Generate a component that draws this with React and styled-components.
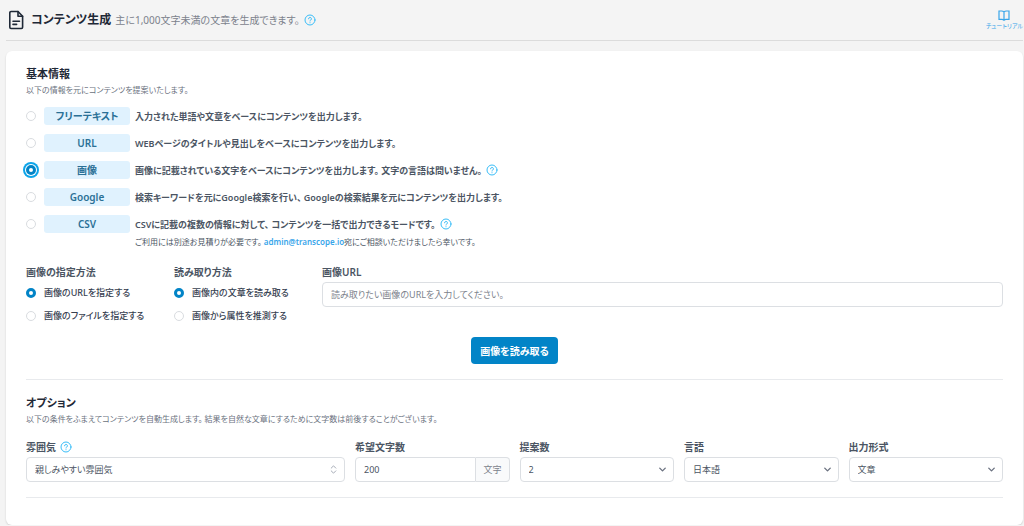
import { useState } from "react";
import styled, { createGlobalStyle } from "styled-components";
import { ChevronDown, ChevronsUpDown } from "lucide-react";

const modes = [
    { id: "free", label: "フリーテキスト", text: "入力された単語や文章をベースにコンテンツを出力します。" },
    { id: "url", label: "URL", text: "WEBページのタイトルや見出しをベースにコンテンツを出力します。" },
    { id: "image", label: "画像", text: "画像に記載されている文字をベースにコンテンツを出力します。 文字の言語は問いません。", help: true },
    { id: "google", label: "Google", text: "検索キーワードを元にGoogle検索を行い、 Googleの検索結果を元にコンテンツを出力します。" },
    { id: "csv", label: "CSV", text: "CSVに記載の複数の情報に対して、 コンテンツを一括で出力できるモードです。", help: true },
];

function Help(){
    return(
        <HelpButton type="button" aria-label="ヘルプ">
            <svg width="12" height="12" viewBox="0 0 12 12" fill="none" stroke="currentColor" strokeLinecap="round">
                <circle cx="6" cy="6" r="5" />
                <path d="M4.600 4.800a1.400 1.400 0 1 1 2.100 1.200c-.5.300-.7.500-.7 1M6 8.700v.1" />
            </svg>
        </HelpButton>
    );
}

function RadioGroup({ title, name, options }){
    const [value, setValue] = useState(options[0]);
    return(
        <Group>
            <legend>{title}</legend>
            {options.map((option) => (
                <Choice key={option}>
                    <Radio
                        type="radio"
                        name={name}
                        checked={value === option}
                        onChange={() => setValue(option)}
                    />
                    {option}
                </Choice>
            ))}
        </Group>
    );
}

function SelectField({ id, label, options, wide, help }){
    return(
        <Field $wide={wide}>
            <LabelRow>
                <label htmlFor={id}>{label}</label>
                {help && <Help />}
            </LabelRow>
            <SelectBox $light={wide}>
                <select id={id}>
                    {options.map((option) => <option key={option}>{option}</option>)}
                </select>
                {wide ? <ChevronsUpDown size={11} /> : <ChevronDown size={11} strokeWidth={3} />}
            </SelectBox>
        </Field>
    );
}

export default function App(){
    const [mode, setMode] = useState("image");
    return(
        <Page>
            <GlobalStyle />
            <Header>
                <svg width="16" height="20" viewBox="0 0 16 20" fill="none" stroke="#1f2937" strokeWidth="1.6" strokeLinejoin="round" strokeLinecap="round">
                    <path d="M10 1.5H3A1.2 1.2 0 0 0 1.8 2.7v14.6A1.2 1.2 0 0 0 3 18.5h10.4a1.2 1.2 0 0 0 1.2-1.2V6.2z" />
                    <path d="M10 1.5v4.7h4.6M5 11.2h6.5M5 14.4h3.6" />
                </svg>
                <h1>コンテンツ生成</h1>
                <Lead>主に1,000文字未満の文章を生成できます。</Lead>
                <Help />
                <Tutorial href="#tutorial">
                    <svg width="12" height="11" viewBox="0 0 12 11" fill="none" stroke="currentColor" strokeWidth="1.2">
                        <path d="M6 2C5.4 1.2 4.600 1 3.500 1H1v8.300h2.800c1 0 1.800.2 2.200 1 .4-.8 1.200-1 2.200-1H11V1H8.500C7.400 1 6.600 1.200 6 2zM6 2v8" />
                    </svg>
                    チュートリアル
                </Tutorial>
            </Header>
            <Card>
                <h2>基本情報</h2>
                <Description>以下の情報を元にコンテンツを提案いたします。</Description>
                <ModeList>
                    {modes.map((m) => (
                        <ModeRow key={m.id}>
                            <label>
                                <Radio
                                    type="radio"
                                    name="mode"
                                    checked={mode === m.id}
                                    onChange={() => setMode(m.id)}
                                    $ring
                                />
                                <Badge>{m.label}</Badge>
                                {m.text}
                            </label>
                            {m.help && <Help />}
                        </ModeRow>
                    ))}
                </ModeList>
                <Note>
                    ご利用には別途お見積りが必要です。 <a href="mailto:admin@transcope.io">admin@transcope.io</a>宛にご相談いただけましたら幸いです。
                </Note>
                <ImageGrid>
                    <RadioGroup title="画像の指定方法" name="source" options={["画像のURLを指定する", "画像のファイルを指定する"]} />
                    <RadioGroup title="読み取り方法" name="method" options={["画像内の文章を読み取る", "画像から属性を推測する"]} />
                    <Field>
                        <LabelRow><label htmlFor="image-url">画像URL</label></LabelRow>
                        <TextInput id="image-url" type="text" placeholder="読み取りたい画像のURLを入力してください。" />
                    </Field>
                </ImageGrid>
                <Submit type="button">画像を読み取る</Submit>
                <Divider />
                <h2>オプション</h2>
                <Description>以下の条件をふまえてコンテンツを自動生成します。 結果を自然な文章にするために文字数は前後することがございます。</Description>
                <OptionGrid>
                    <SelectField id="tone" label="雰囲気" options={["親しみやすい雰囲気"]} wide help />
                    <Field>
                        <LabelRow><label htmlFor="length">希望文字数</label></LabelRow>
                        <InputGroup>
                            <TextInput id="length" type="text" defaultValue="200" />
                            <span>文字</span>
                        </InputGroup>
                    </Field>
                    <SelectField id="count" label="提案数" options={["2", "1", "3"]} />
                    <SelectField id="language" label="言語" options={["日本語", "英語"]} />
                    <SelectField id="format" label="出力形式" options={["文章", "見出し"]} />
                </OptionGrid>
                <Divider />
            </Card>
        </Page>
    );
}

const GlobalStyle = createGlobalStyle`
    *{
        box-sizing: border-box;
    }
    body{
        margin: 0;
        background-color: #F4F4F4;
        color: #374151;
    }
    body, button, input, select{
        font-family: 'Noto Sans', 'Noto Sans CJK JP', sans-serif;
        font-feature-settings: "palt";
        font-size: 9px;
    }
    h1, h2, p{
        margin: 0;
    }
    h1{
        font-size: 12px;
        line-height: 20px;
        font-weight: 600;
        color: #1F2937;
        margin-left: 7px;
    }
    h2{
        font-size: 11px;
        line-height: 16px;
        font-weight: 600;
        color: #1F2937;
    }
    a{
        color: #38A5EA;
        text-decoration: none;
    }
`;
const Page = styled.main`
    padding: 0 1px 0 6px;
`;
const Header = styled.header`
    display: flex;
    align-items: center;
    height: 41px;
    padding-left: 2px;
    margin-bottom: 10px;
    border-bottom: 1px solid #DCDCDC;
`;
const Lead = styled.p`
    font-size: 10px;
    line-height: 16px;
    margin-left: 4px;
    color: #7C828C;
`;
const HelpButton = styled.button`
    display: flex;
    flex: none;
    padding: 0;
    margin-left: 4px;
    border: 0;
    background: none;
    color: #38BDF8;
    cursor: pointer;
`;
const Tutorial = styled.a`
    display: flex;
    flex-direction: column;
    align-items: center;
    margin-left: auto;
    font-size: 6px;
    line-height: 10px;
    white-space: nowrap;
`;
const Card = styled.section`
    padding: 15px 20px 27px;
    background-color: #FFFFFF;
    border-radius: 6px;
    box-shadow: 0 1px 2px rgba(0, 0, 0, 0.15);
`;
const Description = styled.p`
    font-size: 8px;
    line-height: 16px;
    color: #6B7280;
`;
const ModeList = styled.div`
    display: flex;
    flex-direction: column;
    gap: 9px;
    margin-top: 9px;
`;
const ModeRow = styled.div`
    display: flex;
    align-items: center;
    height: 18px;
    font-weight: 600;
    color: #4B5563;
    label{
        display: flex;
        align-items: center;
    }
`;
const Radio = styled.input`
    appearance: none;
    flex: none;
    width: 10px;
    height: 10px;
    margin: 0 8px 0 0;
    border: 1px solid #D9DCE0;
    border-radius: 50%;
    background-color: #FFFFFF;
    &:checked{
        border: 3px solid #0284C7;
        box-shadow: ${(props) => (props.$ring ? "0 0 0 1px #FFFFFF, 0 0 0 3px #0EA5E9" : "none")};
    }
`;
const Badge = styled.span`
    width: 86px;
    margin-right: 5px;
    border-radius: 3px;
    background-color: #E0F2FE;
    color: #2A7096;
    font-size: 10px;
    font-weight: 600;
    line-height: 18px;
    text-align: center;
`;
const Note = styled.p`
    margin: 1px 0 0 109px;
    font-size: 8px;
    line-height: 16px;
    color: #4B5563;
    a{
        font-weight: 600;
    }
`;
const ImageGrid = styled.div`
    display: grid;
    grid-template-columns: 137px 137px 1fr;
    gap: 11px;
    margin-top: 14px;
`;
const Group = styled.fieldset`
    min-width: 0;
    margin: 0;
    padding: 0;
    border: 0;
    legend{
        padding: 0;
        margin-bottom: 1px;
        font-size: 10px;
        line-height: 16px;
        font-weight: 600;
        color: #4B5563;
    }
`;
const Choice = styled.label`
    display: flex;
    align-items: center;
    height: 23px;
    font-weight: 500;
    white-space: nowrap;
`;
const Field = styled.div`
    min-width: 0;
    grid-column: ${(props) => (props.$wide ? "span 2" : "auto")};
`;
const LabelRow = styled.div`
    display: flex;
    align-items: center;
    margin-bottom: 2px;
    font-size: 10px;
    line-height: 16px;
    font-weight: 600;
    color: #4B5563;
`;
const TextInput = styled.input`
    display: block;
    width: 100%;
    min-width: 0;
    height: 25px;
    padding: 0 8px;
    border: 1px solid #DCDFE3;
    border-radius: 4px;
    background-color: #FFFFFF;
    color: #4B5563;
    &::placeholder{
        color: #7C828C;
        opacity: 1;
    }
`;
const InputGroup = styled.div`
    display: flex;
    ${TextInput}{
        flex: 1;
        border-radius: 4px 0 0 4px;
    }
    span{
        padding: 0 7px;
        border: 1px solid #DCDFE3;
        border-left: 0;
        border-radius: 0 4px 4px 0;
        background-color: #F9FAFB;
        color: #7C828C;
        line-height: 23px;
    }
`;
const SelectBox = styled.div`
    display: grid;
    align-items: center;
    select, svg{
        grid-area: 1 / 1;
    }
    select{
        appearance: none;
        width: 100%;
        height: 25px;
        padding: 0 24px 0 8px;
        border: 1px solid #DCDFE3;
        border-radius: 4px;
        background-color: #FFFFFF;
        color: #4B5563;
    }
    svg{
        justify-self: end;
        margin-right: 6px;
        color: ${(props) => (props.$light ? "#9CA3AF" : "#6B7280")};
        pointer-events: none;
    }
`;
const Submit = styled.button`
    display: block;
    height: 27px;
    margin: 10px auto 15px;
    padding: 0 9px;
    border: 0;
    border-radius: 4px;
    background-color: #0284C7;
    color: #FFFFFF;
    font-size: 10px;
    font-weight: 600;
`;
const Divider = styled.hr`
    height: 1px;
    margin: 15px 0;
    border: 0;
    background-color: #E8EAED;
    &:last-child{
        margin-bottom: 0;
    }
`;
const OptionGrid = styled.div`
    display: grid;
    grid-template-columns: repeat(6, 1fr);
    gap: 10px;
    margin-top: 12px;
`;
